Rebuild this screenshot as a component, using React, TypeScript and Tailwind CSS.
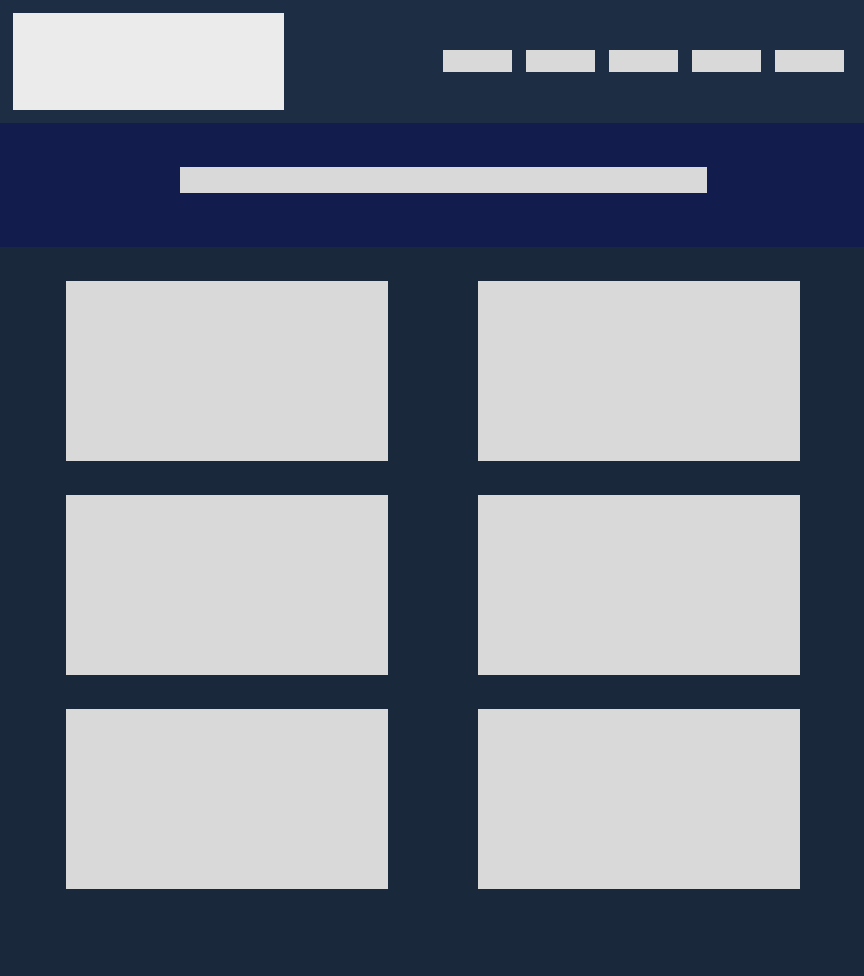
const navItems = [1, 2, 3, 4, 5];
const cards = [1, 2, 3, 4, 5, 6];

function Header() {
  return (
    <header className="flex items-center justify-between gap-8 bg-[#1d2d44] py-[13px] pl-[13px] pr-5">
      <div className="h-[97px] w-[271px] bg-[#ebebeb]" />
      <nav className="flex gap-[14px] pb-px">
        {navItems.map((item) => (
          <a key={item} href={`#section-${item}`} aria-label={`Section ${item}`} className="h-[22px] w-[69px] bg-[#d9d9d9]" />
        ))}
      </nav>
    </header>
  );
}

function Banner() {
  return (
    <section className="bg-[#131d4d] pb-[54px] pl-[180px] pr-[157px] pt-11">
      <div className="h-[26px] bg-[#d9d9d9]" />
    </section>
  );
}

function CardGrid() {
  return (
    <main className="grid grid-cols-2 gap-x-[90px] gap-y-[34px] pb-20 pl-[66px] pr-16 pt-[34px]">
      {cards.map((card) => (
        <article key={card} className="h-[180px] bg-[#d9d9d9]" />
      ))}
    </main>
  );
}

export default function App() {
  return (
    <div className="min-h-screen bg-[#19283b]">
      <Header />
      <Banner />
      <CardGrid />
    </div>
  );
}
